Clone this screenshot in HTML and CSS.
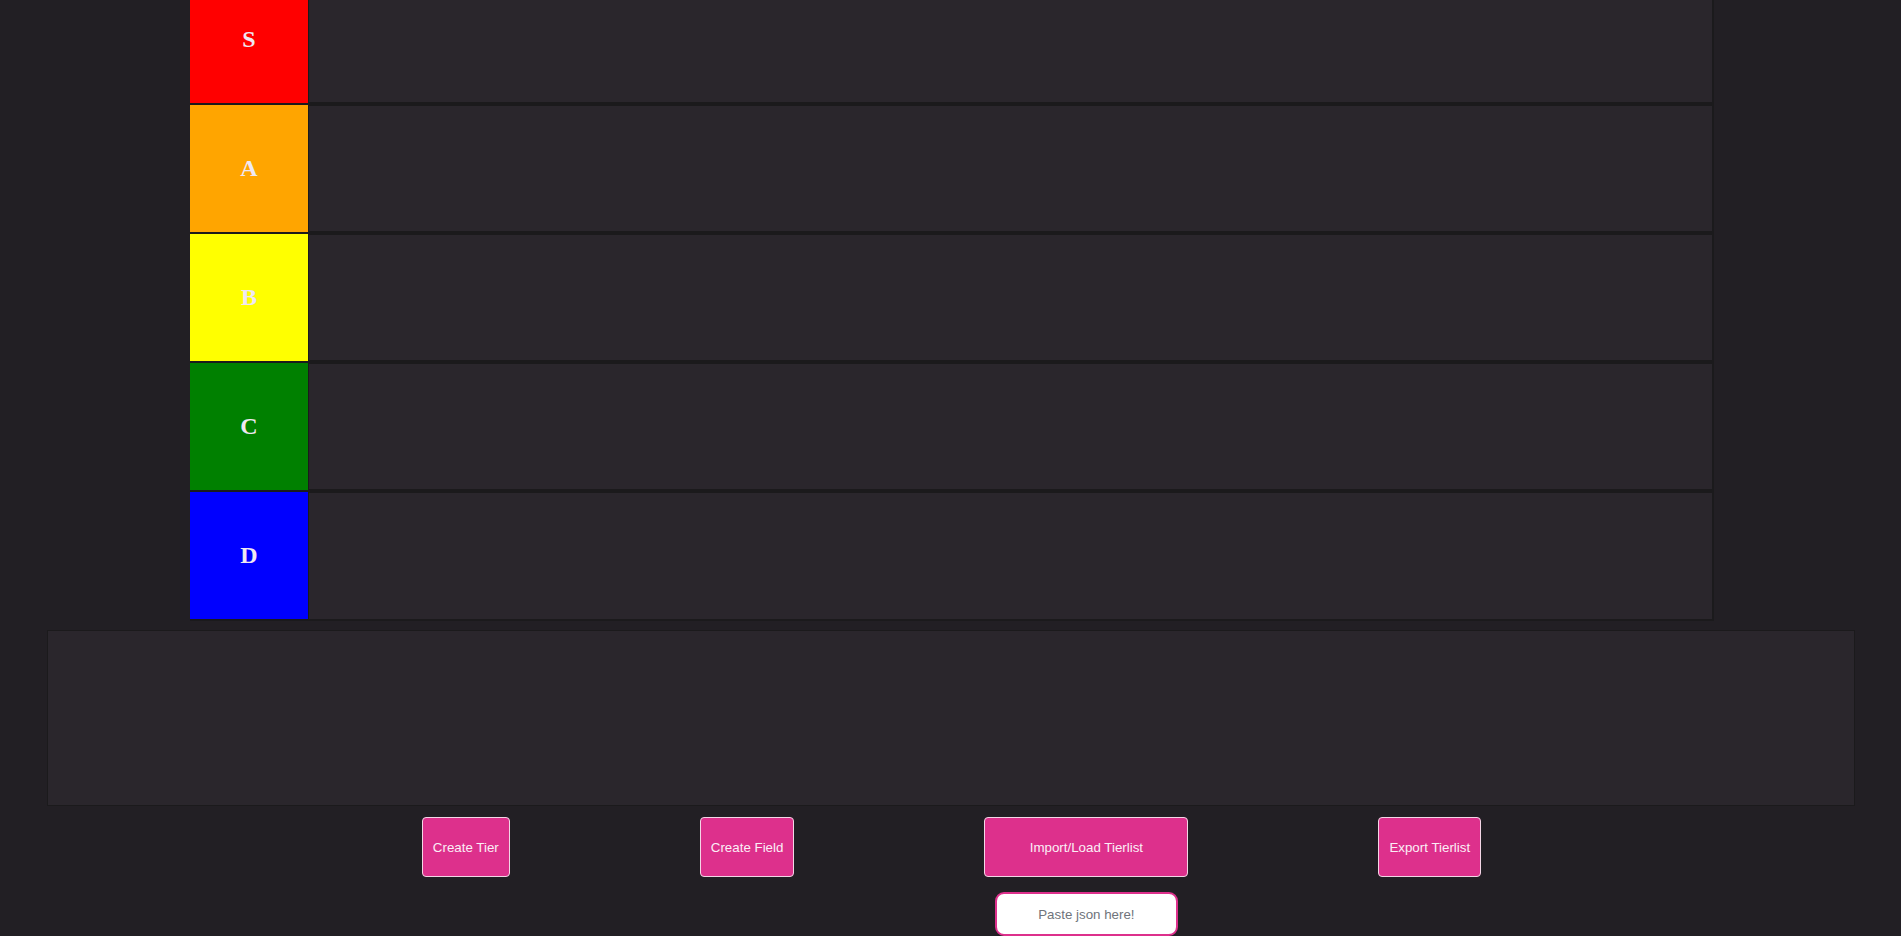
FILE: index.html
```html
<!DOCTYPE html>
<html lang="en">
<head>
<meta charset="utf-8">
<title>Tierlist</title>
<link rel="stylesheet" href="styles.css">
</head>
<body>
<main class="page">
  <section class="tierlist">
    <div class="tier">
      <div class="tier-label tier-s">S</div>
      <div class="tier-items"></div>
    </div>
    <div class="tier">
      <div class="tier-label tier-a">A</div>
      <div class="tier-items"></div>
    </div>
    <div class="tier">
      <div class="tier-label tier-b">B</div>
      <div class="tier-items"></div>
    </div>
    <div class="tier">
      <div class="tier-label tier-c">C</div>
      <div class="tier-items"></div>
    </div>
    <div class="tier">
      <div class="tier-label tier-d">D</div>
      <div class="tier-items"></div>
    </div>
  </section>
  <section class="field"></section>
  <section class="controls">
    <button class="btn">Create Tier</button>
    <button class="btn">Create Field</button>
    <div class="import-group">
      <button class="btn btn-wide">Import/Load Tierlist</button>
      <input class="json-input" type="text" placeholder="Paste json here!">
    </div>
    <button class="btn">Export Tierlist</button>
  </section>
</main>
</body>
</html>
```

FILE: styles.css
```css
html, body {
  margin: 0;
  padding: 0;
  background: #221f24;
}
body {
  font-family: "Liberation Sans", Arial, sans-serif;
  overflow: hidden;
}
.page {
  display: flex;
  flex-direction: column;
  align-items: center;
  margin-top: -24px;
}
.tierlist {
  width: 1524px;
  margin-left: 3px;
  display: flex;
  flex-direction: column;
  gap: 2px;
  background: #1b1a1c;
}
.tier {
  display: flex;
  height: 127px;
}
.tier-label {
  width: 118px;
  flex: none;
  display: flex;
  align-items: center;
  justify-content: center;
  font-family: "Liberation Serif", "Times New Roman", serif;
  font-weight: bold;
  font-size: 24px;
  color: #efe8f2;
}
.tier-s { background: #ff0000; }
.tier-a { background: #ffa500; }
.tier-b { background: #ffff00; }
.tier-c { background: #008000; }
.tier-d { background: #0000ff; }
.tier-items {
  flex: 1;
  background: #2a262c;
  border: 1px solid #1b1a1c;
  border-right-width: 2px;
}
.tierlist .tier:last-child {
  height: 129px;
}
.tier:last-child .tier-label {
  height: 127px;
}
.tier:last-child .tier-items {
  border-bottom-width: 2px;
}
.field {
  width: 1806px;
  height: 174px;
  margin-top: 9px;
  background: #2a262c;
  border: 1px solid #1b1a1c;
}
.controls {
  display: flex;
  align-items: flex-start;
  justify-content: center;
  gap: 190px;
  margin-top: 11px;
  padding-left: 2px;
}
.import-group {
  display: flex;
  flex-direction: column;
  align-items: center;
  gap: 15px;
}
.btn {
  height: 60px;
  padding: 0 10px;
  background: #dd308c;
  color: #fbeef6;
  border: 1px solid #f3d6e6;
  border-radius: 4px;
  font-family: "Liberation Sans", Arial, sans-serif;
  font-size: 13.333px;
}
.btn-wide {
  width: 204px;
}
.json-input {
  box-sizing: border-box;
  width: 183px;
  height: 44px;
  border: 2px solid #dd308c;
  border-radius: 9px;
  background: #ffffff;
  text-align: center;
  font-family: "Liberation Sans", Arial, sans-serif;
  font-size: 13.333px;
  color: #333;
}
.json-input::placeholder {
  color: #6f747b;
}
```
